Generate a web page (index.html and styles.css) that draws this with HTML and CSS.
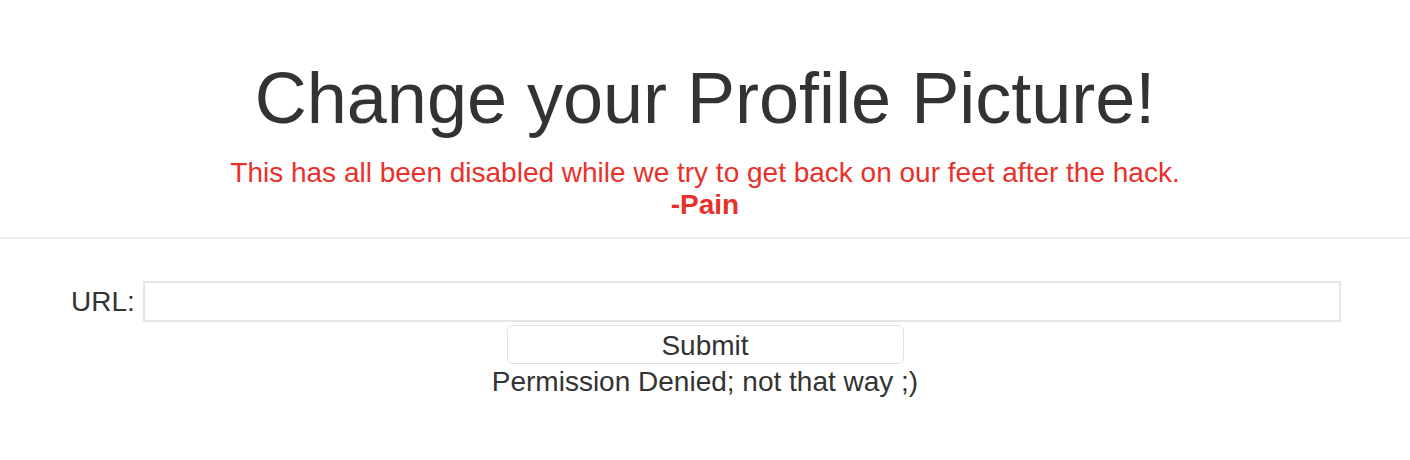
FILE: index.html
```html
<!DOCTYPE html>
<html>
<head>
<meta charset="utf-8">
<link rel="stylesheet" href="styles.css">
</head>
<body>
<header class="hero">
  <h1 class="title">Change your Profile Picture!</h1>
  <p class="notice">This has all been disabled while we try to get back on our feet after the hack.<br><strong class="sig">-Pain</strong></p>
</header>
<hr class="divider">
<form class="form">
  <div class="row">
    <label class="label" for="url">URL:</label>
    <input class="input" id="url" type="text">
  </div>
  <button class="btn" type="button">Submit</button>
  <p class="msg">Permission Denied; not that way ;)</p>
</form>
</body>
</html>
```
FILE: styles.css
```css
html, body {
  margin: 0;
  padding: 0;
  background: #fff;
}
body {
  font-family: "Liberation Sans", Arial, Helvetica, sans-serif;
  color: #333;
}
.hero {
  text-align: center;
  padding-top: 58px;
}
.title {
  font-size: 72px;
  font-weight: normal;
  line-height: 80px;
  margin: 0;
}
.notice {
  color: #e8312a;
  font-size: 28px;
  line-height: 32px;
  margin: 19px 0 0;
}
.sig {
  font-weight: bold;
}
.divider {
  border: 0;
  border-top: 2px solid #eee;
  margin: 16px 0 0;
}
.form {
  display: flex;
  flex-direction: column;
  align-items: center;
  padding-top: 42px;
}
.row {
  display: flex;
  align-items: center;
  width: 100%;
  padding: 0 69px 0 71px;
  box-sizing: border-box;
  gap: 8px;
}
.label {
  font-size: 28px;
  line-height: 40px;
}
.input {
  flex: 1;
  height: 41px;
  box-sizing: border-box;
  border: 2px solid #e6e6e6;
  background: #fff;
  margin: 0;
}
.btn {
  margin-top: 3px;
  width: 397px;
  height: 39px;
  font-family: inherit;
  font-size: 28px;
  line-height: 32px;
  color: #333;
  background: #fff;
  border: 1px solid #e0e0e0;
  border-radius: 6px;
  padding: 2px 0 0;
}
.msg {
  margin: 2px 0 0;
  font-size: 28px;
  line-height: 32px;
}
```
